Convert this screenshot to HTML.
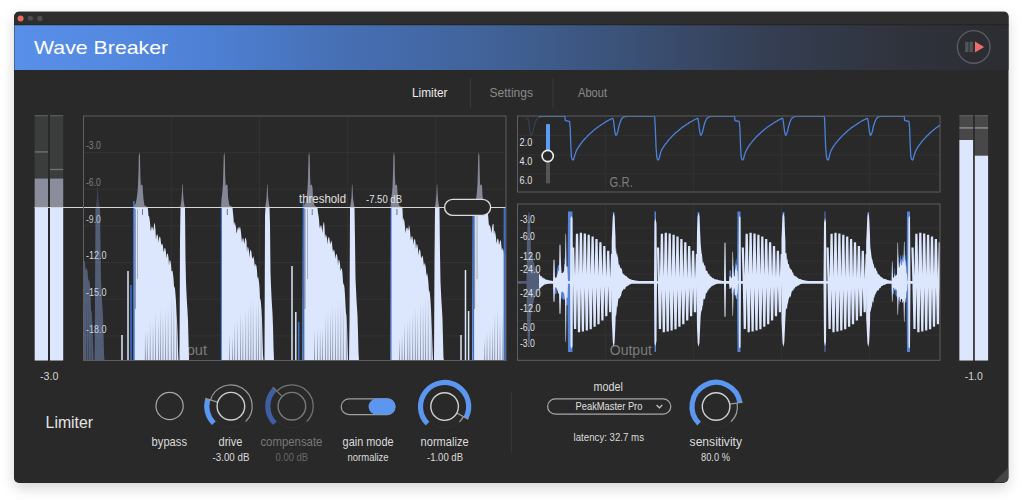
<!DOCTYPE html>
<html><head><meta charset="utf-8"><title>Wave Breaker</title>
<style>
html,body{margin:0;padding:0;background:#fff;width:1023px;height:500px;overflow:hidden;font-family:"Liberation Sans",sans-serif}
#shadow{position:absolute;left:14.4px;top:11.5px;width:994.1px;height:471px;border-radius:5px;background:#292929;box-shadow:0 5px 14px rgba(0,0,0,.17)}
</style></head><body>
<div id="shadow"></div>
<svg width="1023" height="500" viewBox="0 0 1023 500" style="position:absolute;left:0;top:0"><defs>
<linearGradient id="hg" gradientUnits="userSpaceOnUse" x1="14" y1="0" x2="1009" y2="0"><stop offset="0" stop-color="#588fe8"/><stop offset="0.09" stop-color="#558ae2"/><stop offset="0.19" stop-color="#4e81d5"/><stop offset="0.33" stop-color="#466fb4"/><stop offset="0.47" stop-color="#41639a"/><stop offset="0.61" stop-color="#3b5278"/><stop offset="0.75" stop-color="#353f54"/><stop offset="0.89" stop-color="#2f333c"/><stop offset="1" stop-color="#2b2d32"/></linearGradient>
<linearGradient id="gapg" x1="0" y1="0" x2="0" y2="1"><stop offset="0" stop-color="#1c2230" stop-opacity="0"/><stop offset="1" stop-color="#1c2230" stop-opacity="0.6"/></linearGradient>
<clipPath id="win"><rect x="14.4" y="11.5" width="994.1" height="471" rx="5"/></clipPath>
<clipPath id="cin"><rect x="84" y="116.5" width="422" height="243.7"/></clipPath>
<clipPath id="cinL"><rect x="84" y="116.5" width="21" height="243.7"/></clipPath>
<clipPath id="cinR"><rect x="105" y="116.5" width="401" height="243.7"/></clipPath>
<clipPath id="cgr"><rect x="517.5" y="116" width="422.5" height="76"/></clipPath>
<clipPath id="coutL"><rect x="518" y="204.3" width="21" height="155.8"/></clipPath>
<clipPath id="coutR"><rect x="539" y="204.3" width="401" height="155.8"/></clipPath>
<filter id="tint" x="0" y="0" width="100%" height="100%" color-interpolation-filters="sRGB"><feColorMatrix type="matrix" values="0.70 0 0 0 0 0 0.80 0 0 0 0 0 1 0 0 0 0 0 1 0"/></filter>
</defs>
<g clip-path="url(#win)">
<rect x="14" y="11.5" width="995" height="471" fill="#292929"/>
<rect x="14" y="11.5" width="995" height="13.5" fill="#2e2e2e"/>
<rect x="14" y="25" width="995" height="45" fill="url(#hg)"/>
<rect x="14" y="24.3" width="995" height="1" fill="#1c1c1e" opacity="0.7"/>
<circle cx="20.6" cy="18.4" r="3" fill="#ed6a5e"/>
<rect x="27.9" y="15.9" width="5" height="4.6" rx="1.5" fill="#4e4e50"/>
<rect x="37.4" y="15.9" width="5" height="5" rx="1.5" fill="#4e4e50"/>
<path d="M993.5 482.5 L1008.5 467.5 L1008.5 482.5 Z" fill="#454545"/>
</g>
<g font-family='"Liberation Sans", sans-serif'>
<text x="34.0" y="53.9" font-size="17.7" fill="#ffffff" textLength="134.2" lengthAdjust="spacingAndGlyphs">Wave Breaker</text>
<circle cx="973.7" cy="46.9" r="16.3" fill="#2b2d33" stroke="#5c5c62" stroke-width="1.4"/>
<rect x="965.1" y="41.8" width="3.4" height="10.3" fill="#4c5658"/>
<rect x="969.5" y="41.8" width="3.4" height="10.3" fill="#4c5658"/>
<path d="M975 41.6 L984.2 47 L975 52.4 Z" fill="#ee6c6c"/>
<text x="412.0" y="96.9" font-size="13" fill="#ececec" textLength="35.5" lengthAdjust="spacingAndGlyphs">Limiter</text>
<text x="489.5" y="96.9" font-size="13" fill="#8a8a8a" textLength="43.5" lengthAdjust="spacingAndGlyphs">Settings</text>
<text x="578.0" y="96.9" font-size="13" fill="#8a8a8a" textLength="29.0" lengthAdjust="spacingAndGlyphs">About</text>
<rect x="470" y="78" width="1" height="30" fill="#3a3a3a"/>
<rect x="552.5" y="78" width="1" height="30" fill="#3a3a3a"/>
<rect x="34.7" y="115" width="13.3" height="245.5" fill="#3b3c3c"/>
<rect x="34.7" y="115" width="13.3" height="1.3" fill="#585858"/>
<rect x="34.7" y="151.20000000000002" width="13.3" height="1.4" fill="#707070"/>
<rect x="34.7" y="178.6" width="13.3" height="28.900000000000006" fill="#8a8e9c"/>
<rect x="34.7" y="207.5" width="13.3" height="153.0" fill="#dce6fc"/>
<rect x="50" y="115" width="13.2" height="245.5" fill="#3b3c3c"/>
<rect x="50" y="115" width="13.2" height="1.3" fill="#585858"/>
<rect x="50" y="168.8" width="13.2" height="1.4" fill="#707070"/>
<rect x="50" y="178.6" width="13.2" height="28.900000000000006" fill="#8a8e9c"/>
<rect x="50" y="207.5" width="13.2" height="153.0" fill="#dce6fc"/>
<text x="40.0" y="379.6" font-size="11.6" fill="#d4d4d4" textLength="18.4" lengthAdjust="spacingAndGlyphs">-3.0</text>
<rect x="959.4" y="115" width="13.7" height="245.5" fill="#484848"/>
<rect x="959.4" y="115" width="13.7" height="1.3" fill="#5c5c5c"/>
<rect x="959.4" y="127" width="13.7" height="1.8" fill="#808080"/>
<rect x="959.4" y="140" width="13.7" height="220.5" fill="#dce6fc"/>
<rect x="974.8" y="115" width="13.3" height="245.5" fill="#484848"/>
<rect x="974.8" y="115" width="13.3" height="1.3" fill="#5c5c5c"/>
<rect x="974.8" y="127" width="13.3" height="1.8" fill="#808080"/>
<rect x="974.8" y="155.7" width="13.3" height="204.8" fill="#dce6fc"/>
<text x="964.8" y="380.0" font-size="11.6" fill="#d4d4d4" textLength="18.0" lengthAdjust="spacingAndGlyphs">-1.0</text>
<rect x="170.8" y="116.5" width="1" height="244" fill="#323232"/>
<rect x="259.0" y="116.5" width="1" height="244" fill="#323232"/>
<rect x="347.2" y="116.5" width="1" height="244" fill="#323232"/>
<rect x="435.2" y="116.5" width="1" height="244" fill="#323232"/>
<rect x="84" y="151.9" width="422" height="1" fill="#323232"/>
<rect x="84" y="188.6" width="422" height="1" fill="#323232"/>
<rect x="84" y="225.3" width="422" height="1" fill="#323232"/>
<rect x="84" y="262.0" width="422" height="1" fill="#323232"/>
<rect x="84" y="298.7" width="422" height="1" fill="#323232"/>
<rect x="84" y="335.4" width="422" height="1" fill="#323232"/>
<rect x="604.8" y="116.5" width="1" height="75.5" fill="#323232"/>
<rect x="604.8" y="204.5" width="1" height="155.5" fill="#323232"/>
<rect x="693.2" y="116.5" width="1" height="75.5" fill="#323232"/>
<rect x="693.2" y="204.5" width="1" height="155.5" fill="#323232"/>
<rect x="781.2" y="116.5" width="1" height="75.5" fill="#323232"/>
<rect x="781.2" y="204.5" width="1" height="155.5" fill="#323232"/>
<rect x="869.2" y="116.5" width="1" height="75.5" fill="#323232"/>
<rect x="869.2" y="204.5" width="1" height="155.5" fill="#323232"/>
<rect x="518" y="134.9" width="422" height="1" fill="#323232"/>
<rect x="518" y="154.5" width="422" height="1" fill="#323232"/>
<rect x="518" y="173.5" width="422" height="1" fill="#323232"/>
<rect x="518" y="227.5" width="422" height="1" fill="#323232"/>
<rect x="518" y="242.5" width="422" height="1" fill="#323232"/>
<rect x="518" y="260.5" width="422" height="1" fill="#323232"/>
<rect x="518" y="273.5" width="422" height="1" fill="#323232"/>
<rect x="518" y="288.5" width="422" height="1" fill="#323232"/>
<rect x="518" y="301.5" width="422" height="1" fill="#323232"/>
<rect x="518" y="320.0" width="422" height="1" fill="#323232"/>
<rect x="518" y="334.5" width="422" height="1" fill="#323232"/>
<text x="174.5" y="355.3" font-size="15" fill="#7c7c7c" textLength="32.5" lengthAdjust="spacingAndGlyphs">Input</text>
<text x="609.8" y="355.3" font-size="15" fill="#7c7c7c" textLength="42.0" lengthAdjust="spacingAndGlyphs">Output</text>
<text x="609.6" y="187.4" font-size="15" fill="#7c7c7c" textLength="23.2" lengthAdjust="spacingAndGlyphs">G.R.</text>
<text x="86.0" y="149.3" font-size="10" fill="#808080" textLength="14.8" lengthAdjust="spacingAndGlyphs">-3.0</text>
<text x="86.0" y="186.0" font-size="10" fill="#808080" textLength="14.8" lengthAdjust="spacingAndGlyphs">-6.0</text>
<text x="86.0" y="222.6" font-size="10" fill="#c4c4c4" textLength="14.8" lengthAdjust="spacingAndGlyphs">-9.0</text>
<text x="86.0" y="259.2" font-size="10" fill="#dcdcdc" textLength="20.5" lengthAdjust="spacingAndGlyphs">-12.0</text>
<text x="86.0" y="295.9" font-size="10" fill="#dcdcdc" textLength="20.5" lengthAdjust="spacingAndGlyphs">-15.0</text>
<text x="86.0" y="332.6" font-size="10" fill="#dcdcdc" textLength="20.5" lengthAdjust="spacingAndGlyphs">-18.0</text>
<defs><g id="inw"><path d="M84 208L84 208L95 208L95.5 207.1L96 204.3L96.5 200.5L97 195.7L97.5 184.6L98 187.7L98.5 198.2L99 202.1L99.5 205.1L100 207.3L100.5 208L133 208L133.5 205.7L134 205.3L134.5 204.9L135 204.4L135.5 204L136 202.1L136.5 199.8L137 196.6L137.5 192L138 185.6L138.5 171L138.8 156L139 154.7L139.4 152L139.5 152.7L140 156L140.4 176L140.5 178.5L140.8 186L141 185.4L141.5 184.6L142 184.8L142.5 184.9L143 193.2L143.5 199L144 202.6L144.5 205.5L145 205.8L145.5 206L146 206.2L146.5 206.5L147 206.8L147.5 207L148 208L180 208L180.5 206.3L181 203.2L181.5 199.3L182 191.7L182.2 185L182.5 184L182.8 185L183 191.7L183.5 199.3L184 203.2L184.5 205.8L185 208L221 208L221.5 198.8L222 195.5L222.5 190.5L223 182L223.5 163.5L223.7 156L224 153.7L224.2 152L224.5 153.7L224.8 156L225 163.5L225.2 176L225.5 182.3L225.7 186L226 184.9L226.5 184.6L227 184.8L227.5 185L228 196.4L228.5 200.1L229 203.5L229.5 205.6L230 205.8L230.5 206.1L231 206.3L231.5 206.6L232 206.8L232.5 207.6L233 208L265 208L265.5 205.4L266 202.1L266.5 198.2L267 187.7L267.1 185L267.4 184L267.5 184.6L267.6 185L268 195.7L268.5 200.5L269 204.2L269.5 206.4L270 208L302.5 208L303 205.9L303.5 205.5L304 205L304.5 204.6L305 204.2L305.5 202.9L306 201L306.5 197.9L307 194L307.5 189L308 178.4L308.5 156L309 152.7L309.1 152L309.5 154.7L309.7 156L310 171L310.1 176L310.5 186L311 184.5L311.5 184.7L312 184.9L312.5 187.8L313 197.5L313.5 201.3L314 204.3L314.5 205.7L315 205.9L315.5 206.2L316 206.4L316.5 206.7L317 206.9L317.5 208L349.5 208L350 207.4L350.5 204.6L351 200.9L351.5 197L351.9 185L352 184.8L352.2 184L352.4 185L352.5 186.3L353 197.8L353.5 201.7L354 204.9L354.5 207.1L355 208L390.5 208L391 200.1L391.5 196.9L392 192.5L392.5 186.8L393 173.5L393.4 156L393.5 155L393.9 152L394 152.3L394.5 155.7L394.6 156L394.9 176L395 177.3L395.4 186L395.5 185.5L396 184.6L396.5 184.7L397 184.9L397.5 191.9L398 198.6L398.5 202.3L399 205.2L399.5 205.7L400 206L400.5 206.2L401 206.5L401.5 206.7L402 207L402.5 208L434.5 208L435 206.6L435.5 203.6L436 199.7L436.5 193L436.8 185L437 184.2L437.1 184L437.3 185L437.5 190.3L438 198.9L438.5 202.8L439 205.6L439.5 207.8L440 208L472.5 208L473 205.7L473.5 205.2L474 204.8L474.5 204.3L475 203.6L475.5 201.7L476 199.1L476.5 196L477 191L477.5 183.2L478 166L478.2 156L478.5 154L478.8 152L479 153.3L479.4 156L479.5 161L479.8 176L480 181L480.2 186L480.5 185.1L481 184.6L481.5 184.8L482 185L482.5 196L483 199.8L483.5 203.2L484 205.6L484.5 205.8L485 206.1L485.5 206.3L486 206.6L486.5 206.8L487 207.4L487.5 208L506.5 208L506.5 208Z" fill="#8c90a0" opacity="0.92"/><path d="M84 360.3L84 259.8L84.5 260.8L85 262.9L85.5 268L86 271.1L86.5 268L87 268.7L87.5 270.7L88 276.9L88.5 281.6L89 279.4L89.5 281.5L90 286L90.5 294.5L91 311L91.5 310.6L92 315.1L92.5 327.8L93 344.3L93.5 360.3L94.5 360.3L95 300.2L95.5 207.5L96 207.5L96.5 207.5L97 207.5L97.5 207.5L98 207.5L98.5 207.5L99 207.5L99.5 207.5L100 207.5L100.5 244.7L101 279.3L101.5 290.2L102 300.8L102.5 308.5L103 316.2L103.5 334.7L104 354.4L104.5 360.3L133 360.3L133.5 207.5L134 207.5L134.5 207.5L135 207.5L135.5 207.5L136 207.5L136.5 207.5L137 207.5L137.5 207.5L138 207.5L138.5 207.5L138.8 207.5L139 207.5L139.4 207.5L139.5 207.5L140 207.5L140.4 207.5L140.5 207.5L140.8 207.5L141 207.5L141.5 207.5L142 207.5L142.5 207.5L143 207.5L143.5 207.5L144 207.5L144.5 207.5L145 207.5L145.5 207.5L146 207.5L146.5 207.5L147 207.5L147.5 207.5L148 208.9L148.5 216.3L149 215.9L149.5 218.5L150 222.2L150.5 229L151 231.2L151.5 227.1L152 226.7L152.5 227.5L153 228.8L153.5 231L154 223.9L154.5 222.8L155 225.6L155.5 230.3L156 240L156.5 235.8L157 234.3L157.5 234.7L158 236.6L158.5 242.8L159 238.8L159.5 236.6L160 236.8L160.5 238.2L161 243.3L161.5 245.3L162 243.4L162.5 244.4L163 246.6L163.5 251.7L164 251.5L164.5 248L165 248.1L165.5 249.3L166 253.1L166.5 258.4L167 253.8L167.5 253.4L168 254.5L168.5 257.4L169 265.8L169.5 260.5L170 260L170.5 261.4L171 264.3L171.5 271.5L172 271.1L172.5 270.7L173 273.9L173.5 278.3L174 286.3L174.5 287.1L175 288.8L175.5 294.7L176 301.7L176.5 311.8L177 320.2L177.5 331.8L178 349.6L178.5 360.3L179.5 360.3L180 240L180.5 207.5L181 207.5L181.5 207.5L182 207.5L182.2 207.5L182.5 207.5L182.8 207.5L183 207.5L183.5 207.5L184 207.5L184.5 207.5L185 208L185.5 258.7L186 282.5L186.5 293.5L187 303.1L187.5 310.8L188 320.9L188.5 340.6L189 360.3L221 360.3L221.5 207.5L222 207.5L222.5 207.5L223 207.5L223.5 207.5L223.7 207.5L224 207.5L224.2 207.5L224.5 207.5L224.8 207.5L225 207.5L225.2 207.5L225.5 207.5L225.7 207.5L226 207.5L226.5 207.5L227 207.5L227.5 207.5L228 207.5L228.5 207.5L229 207.5L229.5 207.5L230 207.5L230.5 207.5L231 207.5L231.5 207.5L232 207.5L232.5 207.6L233 213.1L233.5 217.8L234 225.6L234.5 221.9L235 223.1L235.5 225.4L236 227.3L236.5 233.4L237 231.9L237.5 229.1L238 227.5L238.5 227L239 230.2L239.5 227.6L240 226.7L240.5 228.9L241 232.2L241.5 237.8L242 242.7L242.5 238.7L243 238.3L243.5 239L244 242.3L244.5 243.8L245 238.7L245.5 237.8L246 238.4L246.5 241.2L247 252.5L247.5 247.2L248 246.8L248.5 248.4L249 251.2L249.5 257.8L250 251.4L250.5 249.6L251 250.4L251.5 252.3L252 257.8L252.5 258.9L253 256.3L253.5 256.9L254 259L254.5 264.1L255 266.8L255.5 263.8L256 264.4L256.5 266.2L257 270.5L257.5 278.7L258 276.6L258.5 278.7L259 282.3L259.5 287.7L260 299.5L260.5 299.1L261 303.6L261.5 310L262 319.3L262.5 337.2L263 355L263.5 360.3L264.5 360.3L265 216L265.5 207.5L266 207.5L266.5 207.5L267 207.5L267.1 207.5L267.4 207.5L267.5 207.5L267.6 207.5L268 207.5L268.5 207.5L269 207.5L269.5 207.5L270 223.8L270.5 271.7L271 285.8L271.5 296.7L272 305.4L272.5 313.1L273 326.8L273.5 346.5L274 360.3L302.5 360.3L303 207.5L303.5 207.5L304 207.5L304.5 207.5L305 207.5L305.5 207.5L306 207.5L306.5 207.5L307 207.5L307.5 207.5L308 207.5L308.5 207.5L309 207.5L309.1 207.5L309.5 207.5L309.7 207.5L310 207.5L310.1 207.5L310.5 207.5L311 207.5L311.5 207.5L312 207.5L312.5 207.5L313 207.5L313.5 207.5L314 207.5L314.5 207.5L315 207.5L315.5 207.5L316 207.5L316.5 207.5L317 207.5L317.5 208.1L318 213.1L318.5 215.8L319 219.5L319.5 226.3L320 228.7L320.5 225.7L321 225.3L321.5 226.1L322 229.3L322.5 232.9L323 225.9L323.5 223.1L324 221.8L324.5 226.5L325 238.5L325.5 234.3L326 235L326.5 236.3L327 238.2L327.5 244.4L328 239.3L328.5 237L329 237.3L329.5 238.7L330 243.7L330.5 243.6L331 240.5L331.5 241.2L332 243.3L332.5 248.5L333 252.6L333.5 249.6L334 249.9L334.5 251.2L335 254.9L335.5 258.9L336 254.2L336.5 253.9L337 254.9L337.5 257.9L338 265.7L338.5 260.1L339 259.7L339.5 261.1L340 264L340.5 271.2L341 269.2L341.5 268L342 269.3L342.5 273.7L343 281.7L343.5 284.5L344 284.5L344.5 288L345 295L345.5 305.1L346 313.2L346.5 315.1L347 325.7L347.5 342.5L348 360.3L349 360.3L349.5 320.2L350 207.5L350.5 207.5L351 207.5L351.5 207.5L351.9 207.5L352 207.5L352.2 207.5L352.4 207.5L352.5 207.5L353 207.5L353.5 207.5L354 207.5L354.5 207.5L355 239.5L355.5 278.2L356 289.1L356.5 300L357 307.7L357.5 315.5L358 332.7L358.5 352.4L359 360.3L390.5 360.3L391 207.5L391.5 207.5L392 207.5L392.5 207.5L393 207.5L393.4 207.5L393.5 207.5L393.9 207.5L394 207.5L394.5 207.5L394.6 207.5L394.9 207.5L395 207.5L395.4 207.5L395.5 207.5L396 207.5L396.5 207.5L397 207.5L397.5 207.5L398 207.5L398.5 207.5L399 207.5L399.5 207.5L400 207.5L400.5 207.5L401 207.5L401.5 207.5L402 207.5L402.5 208.7L403 221.6L403.5 217.9L404 219.1L404.5 222.2L405 226.8L405.5 233.2L406 229.9L406.5 227.7L407 227.9L407.5 227.6L408 230.8L408.5 228.7L409 225L409.5 227.2L410 230.4L410.5 236.7L411 240.6L411.5 236.7L412 236.3L412.5 237.1L413 240.3L413.5 244.9L414 239.7L414.5 238.9L415 239.4L415.5 241.9L416 249.8L416.5 244.4L417 244L417.5 245.5L418 248.5L418.5 255.7L419 251L419.5 249.3L420 250L420.5 251.9L421 257.5L421.5 258.2L422 255.6L422.5 256.1L423 257.6L423.5 262.6L424 266.2L424.5 263.1L425 263.8L425.5 265.5L426 269.8L426.5 276.3L427 272.7L427.5 274.9L428 278.4L428.5 283.9L429 292.2L429.5 290.2L430 294.7L430.5 301.1L431 309L431.5 321.1L432 333L432.5 347.8L433 360.3L434 360.3L434.5 260L435 207.5L435.5 207.5L436 207.5L436.5 207.5L436.8 207.5L437 207.5L437.1 207.5L437.3 207.5L437.5 207.5L438 207.5L438.5 207.5L439 207.5L439.5 207.8L440 254.3L440.5 281.5L441 292.4L441.5 302.3L442 310L442.5 319L443 338.7L443.5 358.3L444 360.3L472 360.3L472.5 283.1L473 207.5L473.5 207.5L474 207.5L474.5 207.5L475 207.5L475.5 207.5L476 207.5L476.5 207.5L477 207.5L477.5 207.5L478 207.5L478.2 207.5L478.5 207.5L478.8 207.5L479 207.5L479.4 207.5L479.5 207.5L479.8 207.5L480 207.5L480.2 207.5L480.5 207.5L481 207.5L481.5 207.5L482 207.5L482.5 207.5L483 207.5L483.5 207.5L484 207.5L484.5 207.5L485 207.5L485.5 207.5L486 207.5L486.5 207.5L487 207.5L487.5 210.6L488 213.7L488.5 220.5L489 226L489.5 224.6L490 226.4L490.5 227.1L491 230.4L491.5 233.3L492 227.8L492.5 225L493 223.7L493.5 224.3L494 234.7L494.5 230.5L495 231.2L495.5 233.9L496 237.5L496.5 243.7L497 240.7L497.5 238.4L498 238.7L498.5 240.1L499 245.1L499.5 243.4L500 240.4L500.5 240.3L501 241.6L501.5 246.8L502 250.9L502.5 248L503 248.7L503.5 250.4L504 254.1L504.5 258.8L505 254.1L505.5 253.7L506 254.8L506.5 257.8L506.5 360.3Z" fill="#dce6fc"/><rect x="51.2" y="206" width="1" height="154.3" fill="#3f70c8"/><rect x="133.0" y="201" width="1.7" height="159.3" fill="#3f70c8"/><rect x="121.25" y="335" width="1.5" height="25.3" fill="#dce6fc"/><rect x="127.25" y="271" width="1.5" height="89.3" fill="#dce6fc"/><rect x="130.25" y="285" width="1.5" height="75.3" fill="#3f70c8"/><rect x="220.8" y="206" width="1" height="154.3" fill="#3f70c8"/><rect x="302.7" y="201" width="1.7" height="159.3" fill="#3f70c8"/><rect x="291.25" y="266" width="1.5" height="94.3" fill="#dce6fc"/><rect x="295.05" y="312" width="1.5" height="48.3" fill="#dce6fc"/><rect x="297.95" y="322" width="1.5" height="38.3" fill="#3f70c8"/><rect x="390.5" y="206" width="1" height="154.3" fill="#3f70c8"/><rect x="472.4" y="201" width="1.7" height="159.3" fill="#3f70c8"/><rect x="460.25" y="335" width="1.5" height="25.3" fill="#dce6fc"/><rect x="464.75" y="270" width="1.5" height="90.3" fill="#dce6fc"/><rect x="467.85" y="311" width="1.5" height="49.3" fill="#dce6fc"/><rect x="57.3" y="209" width="0.7" height="6" fill="#1c2230" opacity="0.8"/><rect x="59.6" y="340" width="0.7" height="21" fill="url(#gapg)"/><rect x="62.4" y="325" width="0.7" height="35" fill="url(#gapg)"/><rect x="65.0" y="326" width="0.7" height="35" fill="url(#gapg)"/><rect x="67.3" y="323" width="0.7" height="38" fill="url(#gapg)"/><rect x="70.6" y="313" width="0.7" height="47" fill="url(#gapg)"/><rect x="73.0" y="322" width="0.7" height="38" fill="url(#gapg)"/><rect x="75.8" y="307" width="0.7" height="53" fill="url(#gapg)"/><rect x="77.8" y="307" width="0.7" height="53" fill="url(#gapg)"/><rect x="80.3" y="312" width="0.7" height="48" fill="url(#gapg)"/><rect x="83.1" y="309" width="0.7" height="52" fill="url(#gapg)"/><rect x="86.1" y="295" width="0.7" height="65" fill="url(#gapg)"/><rect x="88.3" y="300" width="0.7" height="61" fill="url(#gapg)"/><rect x="90.7" y="300" width="0.7" height="60" fill="url(#gapg)"/><rect x="134.9" y="209" width="0.8" height="100" fill="#1c2230" opacity="0.55"/><rect x="137.3" y="209" width="0.7" height="70" fill="#1c2230" opacity="0.4"/><rect x="142.1" y="209" width="0.7" height="6" fill="#1c2230" opacity="0.8"/><rect x="144.9" y="330" width="0.7" height="30" fill="url(#gapg)"/><rect x="146.9" y="329" width="0.7" height="31" fill="url(#gapg)"/><rect x="149.8" y="320" width="0.7" height="40" fill="url(#gapg)"/><rect x="152.7" y="321" width="0.7" height="40" fill="url(#gapg)"/><rect x="155.1" y="312" width="0.7" height="48" fill="url(#gapg)"/><rect x="158.1" y="318" width="0.7" height="42" fill="url(#gapg)"/><rect x="160.1" y="308" width="0.7" height="52" fill="url(#gapg)"/><rect x="162.6" y="312" width="0.7" height="49" fill="url(#gapg)"/><rect x="165.2" y="309" width="0.7" height="51" fill="url(#gapg)"/><rect x="167.8" y="306" width="0.7" height="54" fill="url(#gapg)"/><rect x="170.9" y="293" width="0.7" height="67" fill="url(#gapg)"/><rect x="173.5" y="296" width="0.7" height="65" fill="url(#gapg)"/><rect x="176.0" y="296" width="0.7" height="65" fill="url(#gapg)"/><rect x="226.9" y="209" width="0.7" height="6" fill="#1c2230" opacity="0.8"/><rect x="229.3" y="333" width="0.7" height="27" fill="url(#gapg)"/><rect x="232.3" y="336" width="0.7" height="25" fill="url(#gapg)"/><rect x="234.4" y="321" width="0.7" height="39" fill="url(#gapg)"/><rect x="237.2" y="319" width="0.7" height="41" fill="url(#gapg)"/><rect x="240.1" y="312" width="0.7" height="48" fill="url(#gapg)"/><rect x="242.5" y="318" width="0.7" height="42" fill="url(#gapg)"/><rect x="245.4" y="308" width="0.7" height="52" fill="url(#gapg)"/><rect x="247.9" y="305" width="0.7" height="56" fill="url(#gapg)"/><rect x="250.5" y="299" width="0.7" height="61" fill="url(#gapg)"/><rect x="252.8" y="299" width="0.7" height="61" fill="url(#gapg)"/><rect x="255.9" y="303" width="0.7" height="58" fill="url(#gapg)"/><rect x="258.2" y="299" width="0.7" height="61" fill="url(#gapg)"/><rect x="260.7" y="300" width="0.7" height="60" fill="url(#gapg)"/><rect x="304.6" y="209" width="0.8" height="100" fill="#1c2230" opacity="0.55"/><rect x="307.0" y="209" width="0.7" height="70" fill="#1c2230" opacity="0.4"/><rect x="311.8" y="209" width="0.7" height="6" fill="#1c2230" opacity="0.8"/><rect x="314.0" y="328" width="0.7" height="33" fill="url(#gapg)"/><rect x="317.0" y="327" width="0.7" height="34" fill="url(#gapg)"/><rect x="319.8" y="327" width="0.7" height="33" fill="url(#gapg)"/><rect x="322.1" y="328" width="0.7" height="33" fill="url(#gapg)"/><rect x="325.0" y="314" width="0.7" height="47" fill="url(#gapg)"/><rect x="327.6" y="310" width="0.7" height="50" fill="url(#gapg)"/><rect x="330.1" y="310" width="0.7" height="51" fill="url(#gapg)"/><rect x="332.4" y="305" width="0.7" height="55" fill="url(#gapg)"/><rect x="335.1" y="307" width="0.7" height="53" fill="url(#gapg)"/><rect x="337.7" y="302" width="0.7" height="58" fill="url(#gapg)"/><rect x="340.5" y="299" width="0.7" height="62" fill="url(#gapg)"/><rect x="342.9" y="301" width="0.7" height="59" fill="url(#gapg)"/><rect x="345.9" y="297" width="0.7" height="64" fill="url(#gapg)"/><rect x="396.6" y="209" width="0.7" height="6" fill="#1c2230" opacity="0.8"/><rect x="399.2" y="338" width="0.7" height="22" fill="url(#gapg)"/><rect x="401.7" y="335" width="0.7" height="25" fill="url(#gapg)"/><rect x="404.3" y="322" width="0.7" height="38" fill="url(#gapg)"/><rect x="407.4" y="320" width="0.7" height="40" fill="url(#gapg)"/><rect x="409.5" y="317" width="0.7" height="44" fill="url(#gapg)"/><rect x="412.4" y="311" width="0.7" height="50" fill="url(#gapg)"/><rect x="414.9" y="306" width="0.7" height="54" fill="url(#gapg)"/><rect x="417.4" y="313" width="0.7" height="47" fill="url(#gapg)"/><rect x="420.1" y="300" width="0.7" height="61" fill="url(#gapg)"/><rect x="422.8" y="303" width="0.7" height="57" fill="url(#gapg)"/><rect x="425.2" y="298" width="0.7" height="63" fill="url(#gapg)"/><rect x="427.8" y="296" width="0.7" height="64" fill="url(#gapg)"/><rect x="430.8" y="287" width="0.7" height="74" fill="url(#gapg)"/><rect x="474.3" y="209" width="0.8" height="100" fill="#1c2230" opacity="0.55"/><rect x="476.7" y="209" width="0.7" height="70" fill="#1c2230" opacity="0.4"/><rect x="481.5" y="209" width="0.7" height="6" fill="#1c2230" opacity="0.8"/><rect x="484.4" y="338" width="0.7" height="22" fill="url(#gapg)"/><rect x="486.7" y="331" width="0.7" height="29" fill="url(#gapg)"/><rect x="489.6" y="328" width="0.7" height="32" fill="url(#gapg)"/><rect x="492.2" y="326" width="0.7" height="34" fill="url(#gapg)"/><rect x="494.4" y="312" width="0.7" height="49" fill="url(#gapg)"/><rect x="497.2" y="309" width="0.7" height="51" fill="url(#gapg)"/><rect x="499.7" y="317" width="0.7" height="43" fill="url(#gapg)"/><rect x="502.5" y="309" width="0.7" height="51" fill="url(#gapg)"/><rect x="504.9" y="312" width="0.7" height="48" fill="url(#gapg)"/><rect x="507.2" y="296" width="0.7" height="64" fill="url(#gapg)"/><rect x="510.5" y="292" width="0.7" height="68" fill="url(#gapg)"/><rect x="512.6" y="304" width="0.7" height="56" fill="url(#gapg)"/><rect x="515.3" y="290" width="0.7" height="71" fill="url(#gapg)"/></g></defs>
<g clip-path="url(#cinL)" opacity="0.37" filter="url(#tint)"><use href="#inw"/></g>
<g clip-path="url(#cinR)"><use href="#inw"/></g>
<rect x="503.6" y="208" width="2.2" height="152.3" fill="#3f70c8"/>
<rect x="34.5" y="207" width="471.5" height="1" fill="#d6d6d6"/>
<text x="299.0" y="203.0" font-size="13" fill="#e0e0e0" textLength="47.0" lengthAdjust="spacingAndGlyphs">threshold</text>
<text x="366.0" y="202.7" font-size="10.5" fill="#e0e0e0" textLength="36.0" lengthAdjust="spacingAndGlyphs">-7.50 dB</text>
<rect x="444.6" y="199.4" width="46" height="16" rx="8" fill="#292929" stroke="#dcdcdc" stroke-width="1.4"/>
<rect x="83.5" y="116" width="422.5" height="244.5" fill="none" stroke="#5e5e5e" stroke-width="1"/>
<g clip-path="url(#cgr)"><path d="M526 119.1 L527 118.6 L527.6 118.3 L528 118.5 L528.2 118.6 L528.9 122 L529 123.3 L529.5 128 L530 131.2 L530.2 133 L531 135.3 L531 135.4 L531.9 134.6 L532 134.2 L533 131.5 L533 131.3 L534 126.7 L534.1 126 L535 123.3 L535.5 121.5 L536 120.6 L537 118.7 L537.1 118.4 L538 117.7 L539 116.9 L539.1 116.8 L540 116.7" fill="none" stroke="#364050" stroke-width="1.2" stroke-linejoin="round"/></g>
<g clip-path="url(#cgr)"><path d="M539 116.9 L539.1 116.8 L540 116.7 L541 116.5 L541.6 116.4 L542 116.4 L543 116.4 L544 116.4 L545 116.4 L546 116.4 L547 116.4 L548 116.4 L549 116.4 L550 116.4 L551 116.4 L552 116.4 L553 116.4 L554 116.4 L555 116.4 L556 116.4 L557 116.4 L558 116.4 L559 116.4 L560 116.4 L561 116.4 L562 116.4 L563 116.4 L564 116.4 L564.2 116.4 L564.9 116.6 L565 117.6 L565.3 120.6 L566 120.7 L567 120.9 L568 121.1 L569 121.3 L569.5 121.4 L570 126.1 L570.2 128 L570.8 145 L571 148.8 L571.4 156.5 L572 158.8 L572.1 159.2 L573 160 L573.8 159 L574 158.2 L574.8 155 L575 154.5 L576 151.7 L576.3 150.9 L577 149.7 L578 147.9 L578.5 147 L579 146.3 L580 144.9 L581 143.5 L582 142.2 L583 141 L583.8 140 L584 139.8 L585 138.7 L586 137.6 L587 136.6 L588 135.5 L589 134.6 L590 133.7 L591 132.8 L592 131.9 L592.4 131.5 L593 131 L594 130.1 L595 129.3 L596 128.4 L596.5 128 L597 127.7 L598 127 L599 126.3 L600 125.7 L601 125 L602 124.3 L603 123.7 L604 123 L605 122.3 L605.5 122 L606 121.7 L607 121.2 L608 120.6 L609 120 L609.6 119.7 L610 119.5 L611 119 L612 118.5 L612.5 118.3 L613 118.5 L613.1 118.6 L613.7 122 L614 124.6 L614.4 128 L615 132.3 L615.1 133 L615.9 135.4 L616 135.3 L616.7 134.6 L617 133.8 L617.8 131.5 L618 130.6 L619 126 L620 122.8 L620.4 121.5 L621 120.3 L622 118.4 L623 117.6 L624 116.8 L625 116.6 L626 116.5 L626.5 116.4 L627 116.4 L628 116.4 L629 116.4 L630 116.4 L631 116.4 L632 116.4 L633 116.4 L634 116.4 L635 116.4 L636 116.4 L637 116.4 L638 116.4 L639 116.4 L640 116.4 L641 116.4 L642 116.4 L643 116.4 L644 116.4 L645 116.4 L646 116.4 L647 116.4 L648 116.4 L649 116.4 L650 116.4 L651 116.4 L652 116.4 L653 116.4 L654 116.4 L654.1 116.4 L654.8 117.5 L655 122.7 L655.4 130 L656 146 L656 146.7 L656.8 157 L657 157.8 L657.5 159.6 L658 159.8 L658.4 160 L659 158.9 L659.1 158.6 L660 155 L660 154.8 L661 151.4 L661.1 150.9 L662 149.4 L663 147.6 L663.4 147 L664 146.1 L665 144.7 L665.9 143.5 L666 143.3 L667 142.1 L668 140.8 L668.6 140 L669 139.6 L670 138.6 L671 137.5 L672 136.4 L672.9 135.5 L673 135.4 L674 134.5 L675 133.5 L676 132.6 L677 131.7 L677.2 131.5 L678 130.9 L679 130 L680 129.2 L681 128.3 L681.4 128 L682 127.6 L683 126.9 L684 126.2 L685 125.6 L685.9 125 L686 124.9 L687 124.2 L688 123.6 L689 122.9 L690 122.2 L690.4 122 L691 121.6 L692 121.1 L693 120.5 L694 120 L694.5 119.7 L695 119.4 L696 119 L697 118.5 L697.4 118.3 L698 118.6 L698 118.9 L698.5 122 L699 125.9 L699.2 128 L700 133 L700 133.1 L700.8 135.4 L701 135.2 L701.5 134.6 L702 133.3 L702.6 131.5 L703 129.9 L703.9 126 L704 125.5 L705 122.3 L705.2 121.5 L706 120 L706.9 118.4 L707 118.3 L708 117.5 L708.9 116.8 L709 116.8 L710 116.6 L711 116.5 L711.4 116.4 L712 116.4 L713 116.4 L714 116.4 L715 116.4 L716 116.4 L717 116.4 L718 116.4 L719 116.4 L720 116.4 L721 116.4 L722 116.4 L723 116.4 L724 116.4 L725 116.4 L726 116.4 L727 116.4 L728 116.4 L729 116.4 L730 116.4 L731 116.4 L732 116.4 L733 116.4 L733.9 116.4 L734 116.4 L734.6 116.6 L735 120.6 L736 120.8 L737 121 L738 121.2 L739 121.4 L739.2 121.4 L739.9 128 L740 130.8 L740.5 145 L741 154.6 L741.1 156.5 L741.8 159.2 L742 159.4 L742.7 160 L743 159.6 L743.5 159 L744 157 L744.5 155 L745 153.6 L746 150.9 L747 149.1 L748 147.4 L748.2 147 L749 145.9 L750 144.5 L750.7 143.5 L751 143.1 L752 141.9 L753 140.6 L753.5 140 L754 139.5 L755 138.4 L756 137.3 L757 136.3 L757.7 135.5 L758 135.2 L759 134.3 L760 133.4 L761 132.5 L762 131.6 L762.1 131.5 L763 130.7 L764 129.9 L765 129 L766 128.2 L766.2 128 L767 127.5 L768 126.8 L769 126.1 L770 125.5 L770.7 125 L771 124.8 L772 124.1 L773 123.5 L774 122.8 L775 122.1 L775.2 122 L776 121.6 L777 121 L778 120.4 L779 119.9 L779.3 119.7 L780 119.4 L781 118.9 L782 118.4 L782.2 118.3 L782.8 118.6 L783 119.7 L783.4 122 L784 127.1 L784.1 128 L784.8 133 L785 133.6 L785.6 135.4 L786 135 L786.4 134.6 L787 132.9 L787.5 131.5 L788 129.2 L788.7 126 L789 125 L790 121.8 L790.1 121.5 L791 119.8 L791.7 118.4 L792 118.2 L793 117.4 L793.7 116.8 L794 116.8 L795 116.6 L796 116.4 L796.2 116.4 L797 116.4 L798 116.4 L799 116.4 L800 116.4 L801 116.4 L802 116.4 L803 116.4 L804 116.4 L805 116.4 L806 116.4 L807 116.4 L808 116.4 L809 116.4 L810 116.4 L811 116.4 L812 116.4 L813 116.4 L814 116.4 L815 116.4 L816 116.4 L817 116.4 L818 116.4 L819 116.4 L820 116.4 L821 116.4 L822 116.4 L823 116.4 L823.9 116.4 L824 116.7 L824.5 117.5 L825 129 L825 130 L825.6 146 L826 150.8 L826.5 157 L827 158.8 L827.2 159.6 L828 160 L828 160 L828.9 158.6 L829 157.9 L829.6 155 L830 153.8 L830.9 150.9 L831 150.6 L832 148.9 L833 147.1 L833 147 L834 145.7 L835 144.3 L835.5 143.5 L836 142.9 L837 141.7 L838 140.4 L838.4 140 L839 139.3 L840 138.2 L841 137.2 L842 136.1 L842.5 135.5 L843 135.1 L844 134.2 L845 133.3 L846 132.4 L847 131.5 L847 131.5 L848 130.6 L849 129.7 L850 128.9 L851 128 L851 128 L852 127.4 L853 126.7 L854 126 L855 125.4 L855.5 125 L856 124.7 L857 124 L858 123.4 L859 122.7 L860 122 L860 122 L861 121.5 L862 120.9 L863 120.3 L864 119.8 L864.1 119.7 L865 119.3 L866 118.8 L867 118.3 L867 118.3 L867.6 118.6 L868 120.6 L868.2 122 L869 128 L869 128.4 L869.6 133 L870 134.1 L870.5 135.4 L871 134.8 L871.2 134.6 L872 132.5 L872.4 131.5 L873 128.5 L873.5 126 L874 124.6 L875 121.5 L875 121.4 L876 119.5 L876.5 118.4 L877 118 L878 117.2 L878.5 116.8 L879 116.7 L880 116.6 L881 116.4 L881 116.4 L882 116.4 L883 116.4 L884 116.4 L885 116.4 L886 116.4 L887 116.4 L888 116.4 L889 116.4 L890 116.4 L891 116.4 L892 116.4 L893 116.4 L894 116.4 L895 116.4 L896 116.4 L897 116.4 L898 116.4 L899 116.4 L900 116.4 L901 116.4 L902 116.4 L903 116.4 L903.6 116.4 L904 116.5 L904.3 116.6 L904.7 120.6 L905 120.7 L906 120.8 L907 121 L908 121.2 L908.9 121.4 L909 122.3 L909.6 128 L910 139.3 L910.2 145 L910.8 156.5 L911 157.3 L911.5 159.2 L912 159.6 L912.4 160 L913 159.2 L913.2 159 L914 155.8 L914.2 155 L915 152.8 L915.7 150.9 L916 150.4 L917 148.6 L917.9 147 L918 146.9 L919 145.5 L920 144.1 L920.4 143.5 L921 142.7 L922 141.5 L923 140.2 L923.2 140 L924 139.1 L925 138.1 L926 137 L927 135.9 L927.4 135.5 L928 135 L929 134 L930 133.1 L931 132.2 L931.8 131.5 L932 131.3 L933 130.5 L934 129.6 L935 128.8 L935.9 128 L936 127.9 L937 127.3 L938 126.6 L939 125.9 L940 125.3" fill="none" stroke="#4b82dc" stroke-width="1.3" stroke-linejoin="round"/></g>
<rect x="517.5" y="116" width="422.5" height="76" fill="none" stroke="#5e5e5e" stroke-width="1"/>
<text x="519.6" y="145.6" font-size="10" fill="#e4e4e4" textLength="12.6" lengthAdjust="spacingAndGlyphs">2.0</text>
<text x="519.6" y="165.0" font-size="10" fill="#e4e4e4" textLength="12.6" lengthAdjust="spacingAndGlyphs">4.0</text>
<text x="519.6" y="184.4" font-size="10" fill="#e4e4e4" textLength="12.6" lengthAdjust="spacingAndGlyphs">6.0</text>
<rect x="546" y="160" width="4" height="23.5" rx="1" fill="#555555"/>
<rect x="546" y="124" width="4" height="28" rx="1" fill="#5a9cf5"/>
<circle cx="547.7" cy="156" r="5.6" fill="#292929" stroke="#f0f0f0" stroke-width="1.6"/>
<defs><g id="outw"><path d="M528 212.3 L528 212.3 L528.5 212.3 L528.9 212.3 L529 212.3 L529.5 212.3 L529.8 212.3 L530 212.3 L530 281.8 L529.8 281.8 L529.5 281.8 L529 281.8 L528.9 281.8 L528.5 281.8 L528 281.8 L528 281.8ZM554.5 281.8 L555 281.8 L555.3 281.8 L555.5 281.8 L556 281.8 L556.5 281.8 L557 269.4 L557.5 268.3 L558 265.8 L558.4 264.8 L558.5 264.6 L559 265.6 L559.5 264.6 L560 261.7 L560.5 260.6 L561 259.4 L561.5 281.8 L562 281.8 L562.5 281.8 L563 281.8 L563.5 281.8 L564 281.8 L564.5 258.2 L565 258.2 L565.5 281.8 L565.9 281.8 L566 281.8 L566.5 281.8 L567 281.8 L567.5 281.8 L568 211.5 L568.5 211.5 L569 211.5 L569.5 211.5 L570 211.5 L570.5 211.5 L571 211.5 L571.5 211.5 L572 211.5 L572.5 211.5 L572.5 352.1 L572 352.1 L571.5 352.1 L571 352.1 L570.5 352.1 L570 352.1 L569.5 352.1 L569 352.1 L568.5 352.1 L568 352.1 L567.5 305.2 L567 305.2 L566.5 305.2 L566 305.3 L565.9 305.3 L565.5 305.3 L565 281.8 L564.5 281.8 L564 300.1 L563.5 300.1 L563 298.7 L562.5 298.7 L562 298.8 L561.5 298.3 L561 281.8 L560.5 281.8 L560 281.8 L559.5 281.8 L559 281.8 L558.5 281.8 L558.4 281.8 L558 281.8 L557.5 281.8 L557 281.8 L556.5 294.1 L556 293.9 L555.5 294 L555.3 294 L555 294 L554.5 294ZM612.8 212.3 L613 212.3 L613.5 212.3 L613.7 212.3 L614 212.3 L614.5 212.3 L614.6 212.3 L614.6 281.8 L614.5 281.8 L614 281.8 L613.7 281.8 L613.5 281.8 L613 281.8 L612.8 281.8ZM654.5 211.5 L655 211.5 L655.5 211.5 L656 211.5 L656 352.1 L655.5 352.1 L655 352.1 L654.5 352.1ZM697.5 212.3 L697.6 212.3 L698 212.3 L698.5 212.3 L698.5 212.3 L699 212.3 L699.5 212.3 L699.5 212.3 L699.5 281.8 L699.5 281.8 L699 281.8 L698.5 281.8 L698.5 281.8 L698 281.8 L697.6 281.8 L697.5 281.8ZM729.5 270.1 L729.7 270.1 L730 270.1 L730.5 270.8 L731 270.8 L731.5 281.8 L732 281.8 L732.5 281.8 L732.7 267.3 L733 266.6 L733.5 265.4 L734 281.8 L734.5 281.8 L734.7 281.8 L735 264 L735.5 263 L735.6 262.8 L736 259.5 L736.5 258.3 L737 281.8 L737.5 211.5 L738 211.5 L738.5 211.5 L739 211.5 L739.5 211.5 L740 211.5 L740.5 211.5 L740.5 352.1 L740 352.1 L739.5 352.1 L739 352.1 L738.5 352.1 L738 352.1 L737.5 352.1 L737 300.7 L736.5 281.8 L736 281.8 L735.6 281.8 L735.5 281.8 L735 281.8 L734.7 295.5 L734.5 295.3 L734 294.8 L733.5 281.8 L733 281.8 L732.7 281.8 L732.5 294.6 L732 293.9 L731.5 293.3 L731 281.8 L730.5 281.8 L730 281.8 L729.7 281.8 L729.5 281.8ZM782.5 212.3 L783 212.3 L783.4 212.3 L783.5 212.3 L784 212.3 L784.3 212.3 L784.5 212.3 L784.5 281.8 L784.3 281.8 L784 281.8 L783.5 281.8 L783.4 281.8 L783 281.8 L782.5 281.8ZM824.5 211.5 L825 211.5 L825.5 211.5 L825.5 352.1 L825 352.1 L824.5 352.1ZM867.4 212.3 L867.5 212.3 L868 212.3 L868.2 212.3 L868.5 212.3 L869 212.3 L869.1 212.3 L869.1 281.8 L869 281.8 L868.5 281.8 L868.2 281.8 L868 281.8 L867.5 281.8 L867.4 281.8ZM892 269.1 L892.4 281.8 L892.5 281.8 L893 281.8 L893.4 281.8 L893.5 281.8 L894 281.8 L894.5 269 L894.7 268.4 L894.9 267.9 L895 267.7 L895.5 281.8 L896 281.8 L896.5 281.8 L897 281.8 L897.5 281.8 L897.8 258.2 L898 257.6 L898.5 256.1 L899 281.8 L899.4 281.8 L899.5 281.8 L900 255.4 L900.5 255.4 L901 259 L901.5 259 L902 259 L902.4 254.7 L902.5 254.7 L903 254.7 L903.5 257.3 L904 257.3 L904.4 259.6 L904.5 259.6 L905 259.6 L905.3 259.6 L905.5 254.9 L906 254.9 L906.5 281.8 L907 211.5 L907.5 211.5 L908 211.5 L908.5 211.5 L909 211.5 L909.5 211.5 L910 211.5 L910 352.1 L909.5 352.1 L909 352.1 L908.5 352.1 L908 352.1 L907.5 352.1 L907 352.1 L906.5 298 L906 281.8 L905.5 281.8 L905.3 281.8 L905 281.8 L904.5 281.8 L904.4 281.8 L904 281.8 L903.5 281.8 L903 281.8 L902.5 281.8 L902.4 281.8 L902 281.8 L901.5 281.8 L901 281.8 L900.5 281.8 L900 281.8 L899.5 304.6 L899.4 304.4 L899 303.6 L898.5 281.8 L898 281.8 L897.8 281.8 L897.5 298.3 L897 297.6 L896.5 296.6 L896 295.8 L895.5 295.1 L895 281.8 L894.9 281.8 L894.7 281.8 L894.5 281.8 L894 294.1 L893.5 294.1 L893.4 294.1 L893 294.2 L892.5 294.2 L892.4 294.2 L892 281.8Z" fill="#5583d6"/><path d="M517 281.1 L517.5 281.1 L518 281.1 L518.5 281.1 L519 281.1 L519.5 281.1 L520 281.1 L520.5 281.1 L521 281.1 L521.5 281.1 L522 281.1 L522.5 281.1 L523 281.1 L523.5 281.1 L524 281.1 L524.5 281.1 L525 281.1 L525.5 281.1 L526 281.1 L526.5 281.1 L526.9 241.2 L527 237.9 L527.5 226.9 L528 217 L528 216.7 L528.5 214.2 L528.9 212.5 L529 213.3 L529.5 215.8 L529.8 217 L530 222.5 L530.5 233.5 L530.9 249.2 L531 254.5 L531.5 254.2 L532 256.3 L532.5 255.8 L533 256.8 L533.5 263.1 L534 262 L534.5 267 L535 265.4 L535.5 268.8 L536 266.9 L536.5 268.5 L537 270.7 L537.5 270.4 L538 271.9 L538.5 272.9 L539 273.1 L539.5 273.9 L540 275.2 L540.5 276.1 L541 276.3 L541.5 276.2 L542 276.5 L542.5 277.9 L543 277.6 L543.5 278 L544 278.8 L544.5 278.3 L545 279 L545.5 279.2 L546 279.7 L546.5 279.7 L547 279.8 L547.5 279.8 L548 279.9 L548.5 280.2 L549 280.2 L549.5 280.5 L550 280.2 L550.5 280.5 L551 280.7 L551.5 280.8 L552 280.7 L552.5 280.9 L553 281 L553.5 259.8 L554 259.8 L554.5 259.8 L555 277.6 L555.3 277.6 L555.5 277.6 L556 277.7 L556.5 277.5 L557 275.4 L557.5 274.3 L558 271.8 L558.4 270.8 L558.5 270.6 L559 271.6 L559.5 244.8 L560 244.8 L560.5 244.8 L561 265.4 L561.5 273.3 L562 272.8 L562.5 272.9 L563 272.9 L563.5 271.5 L564 271.5 L564.5 264.2 L565 264.2 L565.5 233.8 L565.9 233.8 L566 233.8 L566.5 266.4 L567 266.4 L567.5 266.4 L568 281.1 L568.5 281.1 L569 281.1 L569.5 281.1 L570 281.1 L570.5 218.3 L571 217.1 L571.5 215.8 L572 217.1 L572.5 218.3 L573 281.1 L573.5 281.1 L574 281.1 L574.5 281.1 L575 281.1 L575.5 281.1 L576 281.1 L576.5 281.1 L577 281.1 L577.5 281.1 L578 281.1 L578.5 281.1 L579 281.1 L579.5 281.1 L580 281.1 L580.5 281.1 L581 281.1 L581.5 281.1 L582 281.1 L582.5 281.1 L583 281.1 L583.5 281.1 L584 281.1 L584.5 281.1 L585 281.1 L585.5 281.1 L586 281.1 L586.5 281.1 L587 281.1 L587.5 281.1 L588 281.1 L588.5 281.1 L589 281.1 L589.5 281.1 L590 281.1 L590.5 281.1 L591 281.1 L591.5 281.1 L592 281.1 L592.5 281.1 L593 281.1 L593.5 281.1 L594 281.1 L594.5 281.1 L595 281.1 L595.5 281.1 L596 281.1 L596.5 281.1 L597 281.1 L597.5 281.1 L598 281.1 L598.5 281.1 L599 281.1 L599.5 281.1 L600 281.1 L600.5 281.1 L601 281.1 L601.5 281.1 L602 281.1 L602.5 281.1 L603 281.1 L603.5 281.1 L604 281.1 L604.5 281.1 L605 281.1 L605.5 281.1 L606 281.1 L606.5 281.1 L607 281.1 L607.5 281.1 L608 281.1 L608.5 281.1 L609 281.1 L609.5 281.1 L610 281.1 L610.5 281.1 L611 281.1 L611.5 279 L611.7 241.2 L612 234.6 L612.5 223.6 L612.8 217 L613 216 L613.5 213.5 L613.7 212.5 L614 214 L614.5 216.5 L614.6 217 L615 225.8 L615.5 236.8 L615.7 252.1 L616 246.8 L616.5 255.3 L617 252.5 L617.5 256.2 L618 257.4 L618.5 262.7 L619 266 L619.5 263.7 L620 267.6 L620.5 267.8 L621 267.9 L621.5 268.8 L622 269.6 L622.5 273.2 L623 273.5 L623.5 273.9 L624 274.9 L624.5 274.4 L625 275.4 L625.5 275.9 L626 275.7 L626.5 276.2 L627 276.7 L627.5 277.4 L628 277.7 L628.5 278.1 L629 278.7 L629.5 278.7 L630 279.2 L630.5 279.3 L631 279.3 L631.5 279.8 L632 279.7 L632.5 279.9 L633 280.1 L633.5 280 L634 280.2 L634.5 280.2 L635 280.4 L635.5 280.7 L636 280.6 L636.5 280.8 L637 280.8 L637.5 280.7 L637.9 280.8 L638 280.9 L638.5 281 L638.9 281.1 L639 281 L639.5 281.1 L640 281.1 L640.1 281.1 L640.4 281.1 L640.5 281.1 L641 281.1 L641.5 281.1 L642 281.1 L642.5 281.1 L643 281.1 L643.2 281.1 L643.5 281.1 L644 281.1 L644.5 281.1 L644.9 281.1 L645 281.1 L645.5 281.1 L646 281.1 L646.5 281.1 L647 281.1 L647.5 281.1 L647.9 281.1 L648 281.1 L648.5 281.1 L649 281.1 L649.5 281.1 L649.9 281.1 L650 281.1 L650.5 281.1 L650.8 281.1 L651 281.1 L651.5 281.1 L652 281.1 L652.5 281.1 L653 281.1 L653.5 281.1 L654 281.1 L654.5 222.1 L655 219.6 L655.5 218.5 L656 221 L656.5 223.5 L657 281.1 L657.5 281.1 L658 281.1 L658.5 281.1 L659 281.1 L659.5 281.1 L660 281.1 L660.5 281.1 L661 281.1 L661.5 281.1 L662 281.1 L662.5 281.1 L663 281.1 L663.5 281.1 L664 281.1 L664.5 281.1 L665 281.1 L665.5 281.1 L666 281.1 L666.5 281.1 L667 281.1 L667.5 281.1 L668 281.1 L668.5 281.1 L669 281.1 L669.5 281.1 L670 281.1 L670.5 281.1 L671 281.1 L671.5 281.1 L672 281.1 L672.5 281.1 L673 281.1 L673.5 281.1 L674 281.1 L674.5 281.1 L675 281.1 L675.5 281.1 L676 281.1 L676.5 281.1 L677 281.1 L677.5 281.1 L678 281.1 L678.5 281.1 L679 281.1 L679.5 281.1 L680 281.1 L680.5 281.1 L681 281.1 L681.5 281.1 L682 281.1 L682.5 281.1 L683 281.1 L683.5 281.1 L684 281.1 L684.5 281.1 L685 281.1 L685.5 281.1 L686 281.1 L686.5 281.1 L687 281.1 L687.5 281.1 L688 281.1 L688.5 281.1 L689 281.1 L689.5 281.1 L690 281.1 L690.5 281.1 L691 281.1 L691.5 281.1 L692 281.1 L692.5 281.1 L693 281.1 L693.5 281.1 L694 281.1 L694.5 281.1 L695 281.1 L695.5 281.1 L696 281.1 L696.5 276.5 L696.5 275.8 L697 231.3 L697.5 220.3 L697.6 217 L698 215.3 L698.5 212.8 L698.5 212.5 L699 214.7 L699.5 217 L699.5 218.1 L700 229.1 L700.5 240.1 L700.5 241.2 L701 247.3 L701.5 252.7 L702 254.4 L702.5 260 L703 263.7 L703.5 261.4 L704 264.2 L704.5 266.2 L705 264.8 L705.5 267.6 L706 271.2 L706.5 270.3 L707 271.1 L707.5 271.2 L708 273.8 L708.5 274.2 L709 273.3 L709.5 275.1 L710 276.1 L710.5 276 L711 277 L711.5 276.6 L712 277.7 L712.5 277.9 L713 278.3 L713.5 277.8 L714 278.9 L714.5 279.2 L715 279.1 L715.5 279.4 L716 279.3 L716.5 279.8 L717 279.5 L717.5 279.6 L718 280.1 L718.5 280.1 L719 280.2 L719.5 280.2 L720 280.5 L720.5 280.6 L721 280.5 L721.5 280.8 L722 280.7 L722.5 281 L722.7 281 L723 280.9 L723.5 280.9 L723.7 280.9 L724 281.1 L724.5 242.8 L725 242.8 L725.2 242.8 L725.5 242.8 L726 281.1 L726.5 281.1 L727 281.1 L727.5 281.1 L728 281.1 L728.1 281.1 L728.5 281.1 L729 281.1 L729.5 276.1 L729.7 276.1 L730 276.1 L730.5 276.8 L731 276.8 L731.5 278.3 L732 277.7 L732.5 251.8 L732.7 251.8 L733 251.8 L733.5 271.4 L734 276.8 L734.5 276.3 L734.7 276.1 L735 270 L735.5 269 L735.6 268.8 L736 265.5 L736.5 264.3 L737 270.9 L737.5 270.6 L738 281.1 L738.5 281.1 L739 217.6 L739.5 216.3 L740 216.5 L740.5 217.8 L741 281.1 L741.5 281.1 L742 281.1 L742.5 281.1 L743 281.1 L743.5 281.1 L744 281.1 L744.5 281.1 L745 281.1 L745.5 281.1 L746 281.1 L746.5 281.1 L747 281.1 L747.5 281.1 L748 281.1 L748.5 281.1 L749 281.1 L749.5 281.1 L750 281.1 L750.5 281.1 L751 281.1 L751.5 281.1 L752 281.1 L752.5 281.1 L753 281.1 L753.5 281.1 L754 281.1 L754.5 281.1 L755 281.1 L755.5 281.1 L756 281.1 L756.5 281.1 L757 281.1 L757.5 281.1 L758 281.1 L758.5 281.1 L759 281.1 L759.5 281.1 L760 281.1 L760.5 281.1 L761 281.1 L761.5 281.1 L762 281.1 L762.5 281.1 L763 281.1 L763.5 281.1 L764 281.1 L764.5 281.1 L765 281.1 L765.5 281.1 L766 281.1 L766.5 281.1 L767 281.1 L767.5 281.1 L768 281.1 L768.5 281.1 L769 281.1 L769.5 281.1 L770 281.1 L770.5 281.1 L771 281.1 L771.5 281.1 L772 281.1 L772.5 281.1 L773 281.1 L773.5 281.1 L774 281.1 L774.5 281.1 L775 281.1 L775.5 281.1 L776 281.1 L776.5 281.1 L777 281.1 L777.5 281.1 L778 281.1 L778.5 281.1 L779 281.1 L779.5 281.1 L780 281.1 L780.5 281.1 L781 281.1 L781.4 275.8 L781.5 239 L782 228 L782.5 217 L783 214.5 L783.4 212.5 L783.5 213 L784 215.5 L784.3 217 L784.5 221.4 L785 232.4 L785.4 241.2 L785.5 253.7 L786 252.5 L786.5 253.5 L787 260.8 L787.5 258.1 L788 264.1 L788.5 263.8 L789 264.5 L789.5 267.8 L790 267.8 L790.5 269.5 L791 269.1 L791.5 270 L792 270.4 L792.5 273 L793 272 L793.5 274.2 L794 275.4 L794.5 275.6 L795 276 L795.5 276.5 L796 276.3 L796.5 276.6 L797 277.8 L797.5 277.8 L798 277.6 L798.5 278.6 L799 279 L799.5 279 L800 278.8 L800.5 279.3 L801 279.3 L801.5 279.4 L802 279.8 L802.5 280 L803 280 L803.5 280.1 L804 280.3 L804.5 280.6 L805 280.6 L805.5 280.6 L806 280.6 L806.5 280.8 L807 280.9 L807.5 280.8 L807.5 280.8 L808 281 L808.5 281.1 L808.5 281.1 L809 281.1 L809.5 281.1 L809.9 281.1 L810 281.1 L810 281.1 L810.5 281.1 L811 281.1 L811.5 281.1 L812 281.1 L812.5 281.1 L813 281.1 L813 281.1 L813.5 281.1 L814 281.1 L814.5 281.1 L814.5 281.1 L815 281.1 L815.5 281.1 L816 281.1 L816.5 281.1 L817 281.1 L817.5 281.1 L817.5 281.1 L818 281.1 L818.5 281.1 L819 281.1 L819.5 281.1 L819.5 281.1 L820 281.1 L820.5 281.1 L820.5 281.1 L821 281.1 L821.5 281.1 L822 281.1 L822.5 281.1 L823 281.1 L823.5 281.1 L824 223 L824.5 220.5 L825 218 L825.5 220.1 L826 222.6 L826.5 281.1 L827 281.1 L827.5 281.1 L828 281.1 L828.5 281.1 L829 281.1 L829.5 281.1 L830 281.1 L830.5 281.1 L831 281.1 L831.5 281.1 L832 281.1 L832.5 281.1 L833 281.1 L833.5 281.1 L834 281.1 L834.5 281.1 L835 281.1 L835.5 281.1 L836 281.1 L836.5 281.1 L837 281.1 L837.5 281.1 L838 281.1 L838.5 281.1 L839 281.1 L839.5 281.1 L840 281.1 L840.5 281.1 L841 281.1 L841.5 281.1 L842 281.1 L842.5 281.1 L843 281.1 L843.5 281.1 L844 281.1 L844.5 281.1 L845 281.1 L845.5 281.1 L846 281.1 L846.5 281.1 L847 281.1 L847.5 281.1 L848 281.1 L848.5 281.1 L849 281.1 L849.5 281.1 L850 281.1 L850.5 281.1 L851 281.1 L851.5 281.1 L852 281.1 L852.5 281.1 L853 281.1 L853.5 281.1 L854 281.1 L854.5 281.1 L855 281.1 L855.5 281.1 L856 281.1 L856.5 281.1 L857 281.1 L857.5 281.1 L858 281.1 L858.5 281.1 L859 281.1 L859.5 281.1 L860 281.1 L860.5 281.1 L861 281.1 L861.5 281.1 L862 281.1 L862.5 281.1 L863 281.1 L863.5 281.1 L864 281.1 L864.5 281.1 L865 281.1 L865.5 281.1 L866 280 L866.2 241.2 L866.5 235.7 L867 224.7 L867.4 217 L867.5 216.2 L868 213.7 L868.2 212.5 L868.5 213.8 L869 216.3 L869.1 217 L869.5 224.7 L870 235.7 L870.2 244.5 L870.5 248.4 L871 251.7 L871.5 256.5 L872 258.8 L872.5 260.1 L873 263 L873.5 264.1 L874 265.7 L874.5 268.7 L875 267.2 L875.5 267.9 L876 269 L876.5 271.6 L877 270.6 L877.5 273 L878 274.4 L878.5 273.7 L879 275.2 L879.5 274.5 L880 276.4 L880.5 276.5 L881 276.6 L881.5 277.1 L882 278 L882.5 277.5 L883 278.1 L883.5 278.9 L884 279 L884.5 278.7 L885 279.1 L885.5 279.1 L886 279.6 L886.5 279.5 L887 279.8 L887.5 279.9 L888 280.2 L888.5 280.2 L889 280.3 L889.5 280.6 L890 280.4 L890.5 280.5 L891 280.7 L891.5 280.9 L892 261.8 L892.4 261.8 L892.5 261.8 L893 277.4 L893.4 277.5 L893.5 277.5 L894 277.5 L894.5 275 L894.7 274.4 L894.9 273.9 L895 273.7 L895.5 276.5 L896 275.8 L896.5 275 L897 274 L897.5 242.8 L897.8 242.8 L898 242.8 L898.5 262.1 L899 268 L899.4 267.2 L899.5 267 L900 261.4 L900.5 261.4 L901 265 L901.5 265 L902 265 L902.4 260.7 L902.5 260.7 L903 260.7 L903.5 263.3 L904 241.8 L904.4 241.8 L904.5 241.8 L905 265.6 L905.3 265.6 L905.5 260.9 L906 260.9 L906.5 273.6 L907 273.6 L907.5 281.1 L908 281.1 L908.5 218 L909 216.8 L909.5 216.1 L910 217.3 L910.5 281.1 L911 281.1 L911.5 281.1 L912 281.1 L912.5 281.1 L913 281.1 L913.5 281.1 L914 281.1 L914.5 281.1 L915 281.1 L915.5 281.1 L916 281.1 L916.5 281.1 L917 281.1 L917.5 281.1 L918 281.1 L918.5 281.1 L919 281.1 L919.5 281.1 L920 281.1 L920.5 281.1 L921 281.1 L921.5 281.1 L922 281.1 L922.5 281.1 L923 281.1 L923.5 281.1 L924 281.1 L924.5 281.1 L925 281.1 L925.5 281.1 L926 281.1 L926.5 281.1 L927 281.1 L927.5 281.1 L928 281.1 L928.5 281.1 L929 281.1 L929.5 281.1 L930 281.1 L930.5 281.1 L931 281.1 L931.5 281.1 L932 281.1 L932.5 281.1 L933 281.1 L933.5 281.1 L934 281.1 L934.5 281.1 L935 281.1 L935.5 281.1 L936 281.1 L936.5 281.1 L937 281.1 L937.5 281.1 L938 281.1 L938.5 281.1 L939 281.1 L939.5 281.1 L940 281.1 L940.5 281.1 L940.5 283.8 L940 283.8 L939.5 283.8 L939 283.8 L938.5 283.8 L938 283.8 L937.5 283.8 L937 283.8 L936.5 283.8 L936 283.8 L935.5 283.8 L935 283.8 L934.5 283.8 L934 283.8 L933.5 283.8 L933 283.8 L932.5 283.8 L932 283.8 L931.5 283.8 L931 283.8 L930.5 283.8 L930 283.8 L929.5 283.8 L929 283.8 L928.5 283.8 L928 283.8 L927.5 283.8 L927 283.8 L926.5 283.8 L926 283.8 L925.5 283.8 L925 283.8 L924.5 283.8 L924 283.8 L923.5 283.8 L923 283.8 L922.5 283.8 L922 283.8 L921.5 283.8 L921 283.8 L920.5 283.8 L920 283.8 L919.5 283.8 L919 283.8 L918.5 283.8 L918 283.8 L917.5 283.8 L917 283.8 L916.5 283.8 L916 283.8 L915.5 283.8 L915 283.8 L914.5 283.8 L914 283.8 L913.5 283.8 L913 283.8 L912.5 283.8 L912 283.8 L911.5 283.8 L911 283.8 L910.5 283.8 L910 347.3 L909.5 348.5 L909 347.8 L908.5 346.6 L908 283.8 L907.5 283.8 L907 291.2 L906.5 291.2 L906 302.6 L905.5 302.6 L905.3 298.4 L905 298.4 L904.5 321.8 L904.4 321.8 L904 321.8 L903.5 300.4 L903 302.8 L902.5 302.8 L902.4 302.8 L902 298.9 L901.5 298.9 L901 298.9 L900.5 302.1 L900 302.1 L899.5 297.1 L899.4 297 L899 296.3 L898.5 301.5 L898 314.8 L897.8 314.8 L897.5 314.8 L897 290.8 L896.5 289.9 L896 289.2 L895.5 288.6 L895 291.1 L894.9 290.9 L894.7 290.4 L894.5 289.9 L894 287.7 L893.5 287.7 L893.4 287.7 L893 287.8 L892.5 301.8 L892.4 301.8 L892 301.8 L891.5 283.8 L891 283.8 L890.5 283.8 L890 283.8 L889.5 283.8 L889 283.8 L888.5 283.8 L888 283.8 L887.5 283.8 L887 283.9 L886.5 283.8 L886 284.2 L885.5 284.5 L885 284.4 L884.5 284.9 L884 285.2 L883.5 284.7 L883 285.2 L882.5 286 L882 285.9 L881.5 286 L881 286.7 L880.5 287.9 L880 287.9 L879.5 288 L879 289.7 L878.5 289.9 L878 291 L877.5 290.3 L877 290.7 L876.5 292.3 L876 292.8 L875.5 294.3 L875 294.6 L874.5 297.9 L874 296.2 L873.5 301.9 L873 302.7 L872.5 300.8 L872 305.5 L871.5 307.1 L871 309.4 L870.5 312.1 L870.2 311.3 L870 323.9 L869.5 334.9 L869.1 342.6 L869 343.3 L868.5 345.8 L868.2 347.1 L868 345.9 L867.5 343.4 L867.4 342.6 L867 334.9 L866.5 323.9 L866.2 318.4 L866 283.8 L865.5 283.8 L865 283.8 L864.5 283.8 L864 283.8 L863.5 283.8 L863 283.8 L862.5 283.8 L862 283.8 L861.5 283.8 L861 283.8 L860.5 283.8 L860 283.8 L859.5 283.8 L859 283.8 L858.5 283.8 L858 283.8 L857.5 283.8 L857 283.8 L856.5 283.8 L856 283.8 L855.5 283.8 L855 283.8 L854.5 283.8 L854 283.8 L853.5 283.8 L853 283.8 L852.5 283.8 L852 283.8 L851.5 283.8 L851 283.8 L850.5 283.8 L850 283.8 L849.5 283.8 L849 283.8 L848.5 283.8 L848 283.8 L847.5 283.8 L847 283.8 L846.5 283.8 L846 283.8 L845.5 283.8 L845 283.8 L844.5 283.8 L844 283.8 L843.5 283.8 L843 283.8 L842.5 283.8 L842 283.8 L841.5 283.8 L841 283.8 L840.5 283.8 L840 283.8 L839.5 283.8 L839 283.8 L838.5 283.8 L838 283.8 L837.5 283.8 L837 283.8 L836.5 283.8 L836 283.8 L835.5 283.8 L835 283.8 L834.5 283.8 L834 283.8 L833.5 283.8 L833 283.8 L832.5 283.8 L832 283.8 L831.5 283.8 L831 283.8 L830.5 283.8 L830 283.8 L829.5 283.8 L829 283.8 L828.5 283.8 L828 283.8 L827.5 283.8 L827 283.8 L826.5 283.8 L826 342 L825.5 344.5 L825 346.6 L824.5 344.1 L824 341.6 L823.5 283.8 L823 283.8 L822.5 283.8 L822 283.8 L821.5 283.8 L821 283.8 L820.5 283.8 L820.5 283.8 L820 283.8 L819.5 283.8 L819.5 283.8 L819 283.8 L818.5 283.8 L818 283.8 L817.5 283.8 L817.5 283.8 L817 283.8 L816.5 283.8 L816 283.8 L815.5 283.8 L815 283.8 L814.5 283.8 L814.5 283.8 L814 283.8 L813.5 283.8 L813 283.8 L813 283.8 L812.5 283.8 L812 283.8 L811.5 283.8 L811 283.8 L810.5 283.8 L810 283.8 L810 283.8 L809.9 283.8 L809.5 283.8 L809 283.8 L808.5 283.8 L808.5 283.8 L808 283.8 L807.5 283.8 L807.5 283.8 L807 283.8 L806.5 283.8 L806 283.8 L805.5 283.8 L805 283.8 L804.5 283.8 L804 283.8 L803.5 283.8 L803 283.8 L802.5 283.8 L802 283.8 L801.5 284 L801 283.9 L800.5 283.9 L800 284.8 L799.5 284.7 L799 284.8 L798.5 285.7 L798 285.7 L797.5 285.4 L797 286.5 L796.5 286.6 L796 287.3 L795.5 286.6 L795 287.6 L794.5 289 L794 288.1 L793.5 289.7 L793 291.6 L792.5 290.3 L792 290.9 L791.5 292.5 L791 295.4 L790.5 296.6 L790 297.9 L789.5 296.2 L789 298.2 L788.5 299.8 L788 303 L787.5 304.3 L787 309.3 L786.5 309.1 L786 307.5 L785.5 317.1 L785.4 318.4 L785 327.2 L784.5 338.2 L784.3 342.6 L784 344.1 L783.5 346.6 L783.4 347.1 L783 345.1 L782.5 342.6 L782 331.6 L781.5 320.6 L781.4 286.8 L781 283.8 L780.5 283.8 L780 283.8 L779.5 283.8 L779 283.8 L778.5 283.8 L778 283.8 L777.5 283.8 L777 283.8 L776.5 283.8 L776 283.8 L775.5 283.8 L775 283.8 L774.5 283.8 L774 283.8 L773.5 283.8 L773 283.8 L772.5 283.8 L772 283.8 L771.5 283.8 L771 283.8 L770.5 283.8 L770 283.8 L769.5 283.8 L769 283.8 L768.5 283.8 L768 283.8 L767.5 283.8 L767 283.8 L766.5 283.8 L766 283.8 L765.5 283.8 L765 283.8 L764.5 283.8 L764 283.8 L763.5 283.8 L763 283.8 L762.5 283.8 L762 283.8 L761.5 283.8 L761 283.8 L760.5 283.8 L760 283.8 L759.5 283.8 L759 283.8 L758.5 283.8 L758 283.8 L757.5 283.8 L757 283.8 L756.5 283.8 L756 283.8 L755.5 283.8 L755 283.8 L754.5 283.8 L754 283.8 L753.5 283.8 L753 283.8 L752.5 283.8 L752 283.8 L751.5 283.8 L751 283.8 L750.5 283.8 L750 283.8 L749.5 283.8 L749 283.8 L748.5 283.8 L748 283.8 L747.5 283.8 L747 283.8 L746.5 283.8 L746 283.8 L745.5 283.8 L745 283.8 L744.5 283.8 L744 283.8 L743.5 283.8 L743 283.8 L742.5 283.8 L742 283.8 L741.5 283.8 L741 283.8 L740.5 346.8 L740 348.1 L739.5 348.3 L739 347 L738.5 283.8 L738 283.8 L737.5 293.9 L737 293.6 L736.5 299.5 L736 298.5 L735.6 295.5 L735.5 295.4 L735 294.4 L734.7 288.9 L734.5 288.8 L734 288.3 L733.5 293.2 L733 315.8 L732.7 315.8 L732.5 315.8 L732 287.5 L731.5 286.9 L731 288.3 L730.5 288.3 L730 288.9 L729.7 288.9 L729.5 288.9 L729 283.8 L728.5 283.8 L728.1 283.8 L728 283.8 L727.5 283.8 L727 283.8 L726.5 283.8 L726 283.8 L725.5 316.8 L725.2 316.8 L725 316.8 L724.5 316.8 L724 283.8 L723.7 283.8 L723.5 283.8 L723 283.8 L722.7 283.8 L722.5 283.8 L722 283.8 L721.5 283.8 L721 283.8 L720.5 283.8 L720 283.8 L719.5 283.8 L719 283.8 L718.5 283.8 L718 283.8 L717.5 283.8 L717 284 L716.5 283.9 L716 283.9 L715.5 284.5 L715 284.8 L714.5 284.5 L714 285.5 L713.5 285.2 L713 285.5 L712.5 286.1 L712 285.7 L711.5 286.7 L711 286.4 L710.5 287.7 L710 288.1 L709.5 288.1 L709 289.9 L708.5 288.7 L708 291.8 L707.5 290.1 L707 293.1 L706.5 293.3 L706 292.4 L705.5 296.2 L705 298.7 L704.5 299.1 L704 299.6 L703.5 298.6 L703 305.7 L702.5 305.5 L702 310.3 L701.5 310.6 L701 312.9 L700.5 318.4 L700.5 319.5 L700 330.5 L699.5 341.5 L699.5 342.6 L699 344.9 L698.5 347.1 L698.5 346.8 L698 344.3 L697.6 342.6 L697.5 339.3 L697 328.3 L696.5 287.4 L696.5 286.2 L696 283.8 L695.5 283.8 L695 283.8 L694.5 283.8 L694 283.8 L693.5 283.8 L693 283.8 L692.5 283.8 L692 283.8 L691.5 283.8 L691 283.8 L690.5 283.8 L690 283.8 L689.5 283.8 L689 283.8 L688.5 283.8 L688 283.8 L687.5 283.8 L687 283.8 L686.5 283.8 L686 283.8 L685.5 283.8 L685 283.8 L684.5 283.8 L684 283.8 L683.5 283.8 L683 283.8 L682.5 283.8 L682 283.8 L681.5 283.8 L681 283.8 L680.5 283.8 L680 283.8 L679.5 283.8 L679 283.8 L678.5 283.8 L678 283.8 L677.5 283.8 L677 283.8 L676.5 283.8 L676 283.8 L675.5 283.8 L675 283.8 L674.5 283.8 L674 283.8 L673.5 283.8 L673 283.8 L672.5 283.8 L672 283.8 L671.5 283.8 L671 283.8 L670.5 283.8 L670 283.8 L669.5 283.8 L669 283.8 L668.5 283.8 L668 283.8 L667.5 283.8 L667 283.8 L666.5 283.8 L666 283.8 L665.5 283.8 L665 283.8 L664.5 283.8 L664 283.8 L663.5 283.8 L663 283.8 L662.5 283.8 L662 283.8 L661.5 283.8 L661 283.8 L660.5 283.8 L660 283.8 L659.5 283.8 L659 283.8 L658.5 283.8 L658 283.8 L657.5 283.8 L657 283.8 L656.5 341.1 L656 343.6 L655.5 346.1 L655 345 L654.5 342.5 L654 283.8 L653.5 283.8 L653 283.8 L652.5 283.8 L652 283.8 L651.5 283.8 L651 283.8 L650.8 283.8 L650.5 283.8 L650 283.8 L649.9 283.8 L649.5 283.8 L649 283.8 L648.5 283.8 L648 283.8 L647.9 283.8 L647.5 283.8 L647 283.8 L646.5 283.8 L646 283.8 L645.5 283.8 L645 283.8 L644.9 283.8 L644.5 283.8 L644 283.8 L643.5 283.8 L643.2 283.8 L643 283.8 L642.5 283.8 L642 283.8 L641.5 283.8 L641 283.8 L640.5 283.8 L640.4 283.8 L640.1 283.8 L640 283.8 L639.5 283.8 L639 283.8 L638.9 283.8 L638.5 283.8 L638 283.8 L637.9 283.8 L637.5 283.8 L637 283.8 L636.5 283.8 L636 283.8 L635.5 283.8 L635 283.8 L634.5 283.8 L634 283.8 L633.5 283.8 L633 283.8 L632.5 283.8 L632 283.8 L631.5 283.8 L631 284 L630.5 284.2 L630 284.5 L629.5 284.5 L629 285.1 L628.5 285.5 L628 285.6 L627.5 286.1 L627 286.8 L626.5 286.4 L626 286.6 L625.5 288.1 L625 289 L624.5 289.6 L624 288.8 L623.5 288.9 L623 290.8 L622.5 290.7 L622 291.3 L621.5 293.7 L621 295.7 L620.5 296.2 L620 297.8 L619.5 298.5 L619 297.7 L618.5 299.1 L618 301.2 L617.5 308 L617 305.2 L616.5 312.8 L616 316.5 L615.7 315 L615.5 322.8 L615 333.8 L614.6 342.6 L614.5 343.1 L614 345.6 L613.7 347.1 L613.5 346.1 L613 343.6 L612.8 342.6 L612.5 336 L612 325 L611.7 318.4 L611.5 284.4 L611 283.8 L610.5 283.8 L610 283.8 L609.5 283.8 L609 283.8 L608.5 283.8 L608 283.8 L607.5 283.8 L607 283.8 L606.5 283.8 L606 283.8 L605.5 283.8 L605 283.8 L604.5 283.8 L604 283.8 L603.5 283.8 L603 283.8 L602.5 283.8 L602 283.8 L601.5 283.8 L601 283.8 L600.5 283.8 L600 283.8 L599.5 283.8 L599 283.8 L598.5 283.8 L598 283.8 L597.5 283.8 L597 283.8 L596.5 283.8 L596 283.8 L595.5 283.8 L595 283.8 L594.5 283.8 L594 283.8 L593.5 283.8 L593 283.8 L592.5 283.8 L592 283.8 L591.5 283.8 L591 283.8 L590.5 283.8 L590 283.8 L589.5 283.8 L589 283.8 L588.5 283.8 L588 283.8 L587.5 283.8 L587 283.8 L586.5 283.8 L586 283.8 L585.5 283.8 L585 283.8 L584.5 283.8 L584 283.8 L583.5 283.8 L583 283.8 L582.5 283.8 L582 283.8 L581.5 283.8 L581 283.8 L580.5 283.8 L580 283.8 L579.5 283.8 L579 283.8 L578.5 283.8 L578 283.8 L577.5 283.8 L577 283.8 L576.5 283.8 L576 283.8 L575.5 283.8 L575 283.8 L574.5 283.8 L574 283.8 L573.5 283.8 L573 283.8 L572.5 346.3 L572 347.6 L571.5 348.8 L571 347.6 L570.5 346.3 L570 283.8 L569.5 283.8 L569 283.8 L568.5 283.8 L568 283.8 L567.5 297.7 L567 297.7 L566.5 297.7 L566 341.8 L565.9 341.8 L565.5 341.8 L565 299.6 L564.5 299.6 L564 293.1 L563.5 293.1 L563 291.8 L562.5 291.8 L562 291.9 L561.5 291.4 L561 298.6 L560.5 313.8 L560 313.8 L559.5 313.8 L559 292.9 L558.5 293.9 L558.4 293.7 L558 292.8 L557.5 290.5 L557 289.6 L556.5 287.7 L556 287.5 L555.5 287.6 L555.3 287.6 L555 287.6 L554.5 301.8 L554 301.8 L553.5 301.8 L553 283.8 L552.5 283.8 L552 283.8 L551.5 283.8 L551 283.8 L550.5 283.8 L550 283.8 L549.5 283.8 L549 283.8 L548.5 283.8 L548 283.8 L547.5 284 L547 283.9 L546.5 284.1 L546 284.1 L545.5 284.5 L545 284.5 L544.5 284.6 L544 285.1 L543.5 285.3 L543 285.8 L542.5 286 L542 287.1 L541.5 286.5 L541 287.4 L540.5 288.6 L540 287.9 L539.5 289.1 L539 290.6 L538.5 291.1 L538 291.7 L537.5 293.2 L537 293.4 L536.5 295 L536 296.2 L535.5 295.6 L535 297.7 L534.5 297.4 L534 298.6 L533.5 302.5 L533 303.9 L532.5 309.2 L532 304.6 L531.5 311.6 L531 315.7 L530.9 315.6 L530.5 326.1 L530 337.1 L529.8 342.6 L529.5 343.8 L529 346.3 L528.9 347.1 L528.5 345.4 L528 342.9 L528 342.6 L527.5 332.7 L527 321.7 L526.9 318.4 L526.5 283.8 L526 283.8 L525.5 283.8 L525 283.8 L524.5 283.8 L524 283.8 L523.5 283.8 L523 283.8 L522.5 283.8 L522 283.8 L521.5 283.8 L521 283.8 L520.5 283.8 L520 283.8 L519.5 283.8 L519 283.8 L518.5 283.8 L518 283.8 L517.5 283.8 L517 283.8Z" fill="#dce6fc"/><path d="M573.1 247.5 L574.1 282.3 L575.1 328.9 L576 282.3 L577 233.8 L578 282.3 L579 332.2 L579.9 282.3 L580.9 232.7 L581.9 282.3 L582.9 331.6 L583.8 282.3 L584.8 233.4 L585.8 282.3 L586.8 330.5 L587.7 282.3 L588.7 234.7 L589.7 282.3 L590.7 329.2 L591.6 282.3 L592.6 236.6 L593.6 282.3 L594.6 326.8 L595.5 282.3 L596.5 239.1 L597.5 282.3 L598.5 324.3 L599.4 282.3 L600.4 242.2 L601.4 282.3 L602.4 320.4 L603.3 282.3 L604.3 246.1 L605.3 282.3 L606.3 316.1 L607.2 282.3 L608.2 250.9 L609.2 282.3 L610.2 312.1 L611.1 282.3 L612.1 254M658 247.5 L658.9 282.3 L659.9 328.9 L660.9 282.3 L661.9 233.8 L662.8 282.3 L663.8 332.2 L664.8 282.3 L665.8 232.7 L666.7 282.3 L667.7 331.6 L668.7 282.3 L669.7 233.4 L670.6 282.3 L671.6 330.5 L672.6 282.3 L673.6 234.7 L674.5 282.3 L675.5 329.2 L676.5 282.3 L677.5 236.6 L678.4 282.3 L679.4 326.8 L680.4 282.3 L681.4 239.1 L682.3 282.3 L683.3 324.3 L684.3 282.3 L685.3 242.2 L686.2 282.3 L687.2 320.4 L688.2 282.3 L689.2 246.1 L690.1 282.3 L691.1 316.1 L692.1 282.3 L693.1 250.9 L694 282.3 L695 312.1 L696 282.3 L697 254M742.8 247.5 L743.8 282.3 L744.8 328.9 L745.7 282.3 L746.7 233.8 L747.7 282.3 L748.7 332.2 L749.6 282.3 L750.6 232.7 L751.6 282.3 L752.6 331.6 L753.5 282.3 L754.5 233.4 L755.5 282.3 L756.5 330.5 L757.4 282.3 L758.4 234.7 L759.4 282.3 L760.4 329.2 L761.3 282.3 L762.3 236.6 L763.3 282.3 L764.3 326.8 L765.2 282.3 L766.2 239.1 L767.2 282.3 L768.2 324.3 L769.1 282.3 L770.1 242.2 L771.1 282.3 L772.1 320.4 L773 282.3 L774 246.1 L775 282.3 L776 316.1 L776.9 282.3 L777.9 250.9 L778.9 282.3 L779.9 312.1 L780.8 282.3 L781.8 254M827.6 247.5 L828.6 282.3 L829.6 328.9 L830.6 282.3 L831.6 233.8 L832.5 282.3 L833.5 332.2 L834.5 282.3 L835.5 232.7 L836.4 282.3 L837.4 331.6 L838.4 282.3 L839.4 233.4 L840.3 282.3 L841.3 330.5 L842.3 282.3 L843.3 234.7 L844.2 282.3 L845.2 329.2 L846.2 282.3 L847.2 236.6 L848.1 282.3 L849.1 326.8 L850.1 282.3 L851.1 239.1 L852 282.3 L853 324.3 L854 282.3 L855 242.2 L855.9 282.3 L856.9 320.4 L857.9 282.3 L858.9 246.1 L859.8 282.3 L860.8 316.1 L861.8 282.3 L862.8 250.9 L863.7 282.3 L864.7 312.1 L865.7 282.3 L866.7 254M912.5 247.5 L913.5 282.3 L914.5 328.9 L915.4 282.3 L916.4 233.8 L917.4 282.3 L918.4 332.2 L919.3 282.3 L920.3 232.7 L921.3 282.3 L922.3 331.6 L923.2 282.3 L924.2 233.4 L925.2 282.3 L926.2 330.5 L927.1 282.3 L928.1 234.7 L929.1 282.3 L930.1 329.2 L931 282.3 L932 236.6 L933 282.3 L934 326.8 L934.9 282.3 L935.9 239.1 L936.9 282.3 L937.9 324.3 L938.8 282.3 L939.8 242.2 L940.8 282.3 L941.8 320.4 L942.7 282.3 L943.7 246.1 L944.7 282.3 L945.7 316.1 L946.6 282.3 L947.6 250.9 L948.6 282.3 L949.6 312.1 L950.5 282.3 L951.5 254" fill="none" stroke="#dce6fc" stroke-width="2.2" stroke-linejoin="miter" stroke-miterlimit="10"/></g></defs>
<g clip-path="url(#coutL)" opacity="0.37" filter="url(#tint)"><use href="#outw"/></g>
<g clip-path="url(#coutR)"><use href="#outw"/></g>
<rect x="517.5" y="204" width="422.5" height="156.3" fill="none" stroke="#5e5e5e" stroke-width="1"/>
<text x="520.0" y="223.2" font-size="10" fill="#e0e0e0" textLength="14.8" lengthAdjust="spacingAndGlyphs">-3.0</text>
<text x="520.0" y="239.5" font-size="10" fill="#e0e0e0" textLength="14.8" lengthAdjust="spacingAndGlyphs">-6.0</text>
<text x="520.0" y="259.8" font-size="10" fill="#e0e0e0" textLength="20.5" lengthAdjust="spacingAndGlyphs">-12.0</text>
<text x="520.0" y="273.4" font-size="10" fill="#e0e0e0" textLength="20.5" lengthAdjust="spacingAndGlyphs">-24.0</text>
<text x="520.0" y="297.2" font-size="10" fill="#e0e0e0" textLength="20.5" lengthAdjust="spacingAndGlyphs">-24.0</text>
<text x="520.0" y="311.6" font-size="10" fill="#e0e0e0" textLength="20.5" lengthAdjust="spacingAndGlyphs">-12.0</text>
<text x="520.0" y="330.8" font-size="10" fill="#e0e0e0" textLength="14.8" lengthAdjust="spacingAndGlyphs">-6.0</text>
<text x="520.0" y="347.3" font-size="10" fill="#e0e0e0" textLength="14.8" lengthAdjust="spacingAndGlyphs">-3.0</text>
<text x="45.6" y="428.0" font-size="17.3" fill="#e4e4e4" textLength="47.4" lengthAdjust="spacingAndGlyphs">Limiter</text>
<circle cx="169.6" cy="406" r="13.6" fill="none" stroke="#a8a8a8" stroke-width="1.2"/>
<text x="151.6" y="446.0" font-size="12.6" fill="#dcdcdc" textLength="35.4" lengthAdjust="spacingAndGlyphs">bypass</text>
<path d="M245.70 421.52 A21.3 21.3 0 0 1 216.10 421.52" fill="none" stroke="#2f2f2f" stroke-width="1.2"/>
<path d="M210.53 399.97 A21.3 21.3 0 1 1 245.70 421.52" fill="none" stroke="#989898" stroke-width="1.25"/>
<path d="M213.86 423.24 A24.1 24.1 0 0 1 207.85 399.15" fill="none" stroke="#5b97f0" stroke-width="5.2"/>
<path d="M217.51 402.11 L205.18 398.34" stroke="#989898" stroke-width="1.25"/>
<circle cx="230.9" cy="406.2" r="13.8" fill="none" stroke="#d0d0d0" stroke-width="1.4"/>
<path d="M306.70 421.52 A21.3 21.3 0 0 1 277.10 421.52" fill="none" stroke="#2f2f2f" stroke-width="1.2"/>
<path d="M276.84 391.14 A21.3 21.3 0 1 1 306.70 421.52" fill="none" stroke="#747474" stroke-width="1.25"/>
<path d="M274.86 423.24 A24.1 24.1 0 0 1 274.86 389.16" fill="none" stroke="#3f5fa2" stroke-width="5.2"/>
<path d="M282.00 396.30 L272.88 387.18" stroke="#747474" stroke-width="1.25"/>
<circle cx="291.9" cy="406.2" r="13.8" fill="none" stroke="#7a7a7a" stroke-width="1.4"/>
<path d="M459.40 421.92 A21.3 21.3 0 0 1 429.80 421.92" fill="none" stroke="#2f2f2f" stroke-width="1.2"/>
<path d="M463.41 416.60 A21.3 21.3 0 0 1 459.40 421.92" fill="none" stroke="#989898" stroke-width="1.25"/>
<path d="M427.56 423.64 A24.1 24.1 0 1 1 465.88 417.91" fill="none" stroke="#5b97f0" stroke-width="5.2"/>
<path d="M456.96 413.17 L468.35 419.23" stroke="#989898" stroke-width="1.25"/>
<circle cx="444.6" cy="406.6" r="13.8" fill="none" stroke="#d0d0d0" stroke-width="1.4"/>
<path d="M730.90 421.82 A21.3 21.3 0 0 1 701.30 421.82" fill="none" stroke="#2f2f2f" stroke-width="1.2"/>
<path d="M737.11 402.98 A21.3 21.3 0 0 1 730.90 421.82" fill="none" stroke="#989898" stroke-width="1.25"/>
<path d="M699.06 423.54 A24.1 24.1 0 1 1 739.87 402.52" fill="none" stroke="#5b97f0" stroke-width="5.2"/>
<path d="M729.91 404.19 L742.63 402.06" stroke="#989898" stroke-width="1.25"/>
<circle cx="716.1" cy="406.5" r="13.8" fill="none" stroke="#d0d0d0" stroke-width="1.4"/>
<text x="218.6" y="446.0" font-size="12.6" fill="#dcdcdc" textLength="23.8" lengthAdjust="spacingAndGlyphs">drive</text>
<text x="212.6" y="461.3" font-size="10.7" fill="#dcdcdc" textLength="36.8" lengthAdjust="spacingAndGlyphs">-3.00 dB</text>
<text x="260.4" y="446.0" font-size="12.6" fill="#787878" textLength="62.0" lengthAdjust="spacingAndGlyphs">compensate</text>
<text x="275.6" y="461.3" font-size="10.7" fill="#686868" textLength="32.4" lengthAdjust="spacingAndGlyphs">0.00 dB</text>
<rect x="341.2" y="398.8" width="53.8" height="15.8" rx="7.9" fill="none" stroke="#a0a0a0" stroke-width="1.2"/>
<rect x="368.6" y="398.6" width="26.8" height="16" rx="8" fill="#5b97f0"/>
<text x="342.6" y="446.0" font-size="12.6" fill="#dcdcdc" textLength="51.0" lengthAdjust="spacingAndGlyphs">gain mode</text>
<text x="347.6" y="461.3" font-size="10.7" fill="#dcdcdc" textLength="41.0" lengthAdjust="spacingAndGlyphs">normalize</text>
<text x="420.6" y="446.0" font-size="12.6" fill="#dcdcdc" textLength="48.0" lengthAdjust="spacingAndGlyphs">normalize</text>
<text x="427.0" y="461.3" font-size="10.7" fill="#dcdcdc" textLength="36.0" lengthAdjust="spacingAndGlyphs">-1.00 dB</text>
<rect x="511" y="392" width="1" height="60" fill="#363636"/>
<text x="593.6" y="390.6" font-size="12.6" fill="#dcdcdc" textLength="29.4" lengthAdjust="spacingAndGlyphs">model</text>
<rect x="547.6" y="398.8" width="123.2" height="15.4" rx="7.7" fill="none" stroke="#a8a8a8" stroke-width="1.2"/>
<text x="575.6" y="410.0" font-size="10.5" fill="#e0e0e0" textLength="66.8" lengthAdjust="spacingAndGlyphs">PeakMaster Pro</text>
<path d="M656.6 405 L659.4 407.9 L662.2 405" fill="none" stroke="#cccccc" stroke-width="1.2"/>
<text x="573.6" y="441.0" font-size="10.5" fill="#dcdcdc" textLength="70.4" lengthAdjust="spacingAndGlyphs">latency: 32.7 ms</text>
<text x="689.6" y="446.0" font-size="12.6" fill="#dcdcdc" textLength="52.4" lengthAdjust="spacingAndGlyphs">sensitivity</text>
<text x="701.0" y="461.3" font-size="10.7" fill="#dcdcdc" textLength="29.0" lengthAdjust="spacingAndGlyphs">80.0 %</text>
</g></svg>
</body></html>
